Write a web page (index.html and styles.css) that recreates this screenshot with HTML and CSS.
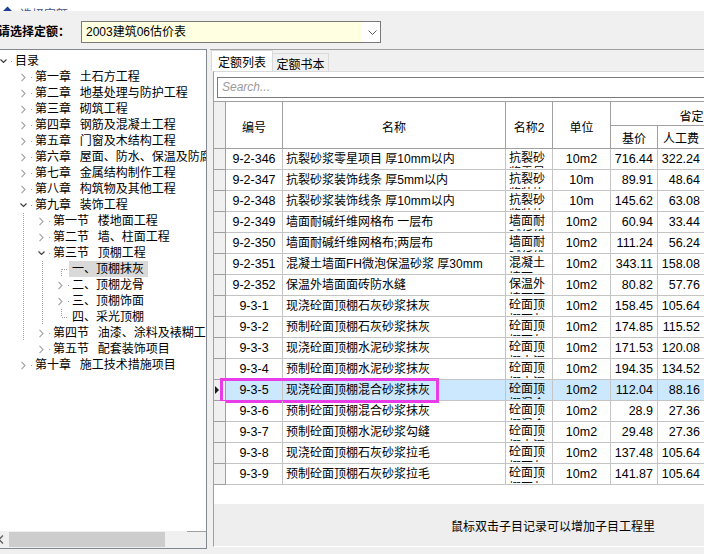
FILE: index.html
```html
<!DOCTYPE html>
<html lang="zh-CN">
<head>
<meta charset="utf-8">
<title>选择定额</title>
<link rel="stylesheet" href="styles.css">
</head>
<body>
<div class="titlebar"><span class="ticon"></span><span class="ttext">选择定额</span></div>

<div class="selrow">
  <span class="sellabel">请选择定额：</span>
  <div class="combo">
    <span class="combo-text">2003建筑06估价表</span>
    <span class="combo-btn"><svg width="9" height="5" viewBox="0 0 9 5"><path d="M0.5 0.5L4.5 4.5L8.5 0.5" fill="none" stroke="#606060" stroke-width="1"/></svg></span>
  </div>
</div>

<div class="main">
  <div class="tree">
    <div class="tree-body">
      <div class="node l0"><span class="arr"><svg class="ex" width="7" height="7" viewBox="0 0 7 7"><path d="M0.5 1.5L3.5 4.5L6.5 1.5" fill="none" stroke="#404040" stroke-width="1.2"/></svg><i class="dot"></i></span><span class="t">目录</span></div>
      <div class="node l1"><span class="arr"><svg class="co" width="7" height="9" viewBox="0 0 7 9"><path d="M1.5 0.8L5 4.5L1.5 8.2" fill="none" stroke="#a6a6a6" stroke-width="1.2"/></svg><i class="dot"></i></span><span class="t">第一章  土石方工程</span></div>
      <div class="node l1"><span class="arr"><svg class="co" width="7" height="9" viewBox="0 0 7 9"><path d="M1.5 0.8L5 4.5L1.5 8.2" fill="none" stroke="#a6a6a6" stroke-width="1.2"/></svg><i class="dot"></i></span><span class="t">第二章  地基处理与防护工程</span></div>
      <div class="node l1"><span class="arr"><svg class="co" width="7" height="9" viewBox="0 0 7 9"><path d="M1.5 0.8L5 4.5L1.5 8.2" fill="none" stroke="#a6a6a6" stroke-width="1.2"/></svg><i class="dot"></i></span><span class="t">第三章  砌筑工程</span></div>
      <div class="node l1"><span class="arr"><svg class="co" width="7" height="9" viewBox="0 0 7 9"><path d="M1.5 0.8L5 4.5L1.5 8.2" fill="none" stroke="#a6a6a6" stroke-width="1.2"/></svg><i class="dot"></i></span><span class="t">第四章  钢筋及混凝土工程</span></div>
      <div class="node l1"><span class="arr"><svg class="co" width="7" height="9" viewBox="0 0 7 9"><path d="M1.5 0.8L5 4.5L1.5 8.2" fill="none" stroke="#a6a6a6" stroke-width="1.2"/></svg><i class="dot"></i></span><span class="t">第五章  门窗及木结构工程</span></div>
      <div class="node l1"><span class="arr"><svg class="co" width="7" height="9" viewBox="0 0 7 9"><path d="M1.5 0.8L5 4.5L1.5 8.2" fill="none" stroke="#a6a6a6" stroke-width="1.2"/></svg><i class="dot"></i></span><span class="t">第六章  屋面、防水、保温及防腐工程</span></div>
      <div class="node l1"><span class="arr"><svg class="co" width="7" height="9" viewBox="0 0 7 9"><path d="M1.5 0.8L5 4.5L1.5 8.2" fill="none" stroke="#a6a6a6" stroke-width="1.2"/></svg><i class="dot"></i></span><span class="t">第七章  金属结构制作工程</span></div>
      <div class="node l1"><span class="arr"><svg class="co" width="7" height="9" viewBox="0 0 7 9"><path d="M1.5 0.8L5 4.5L1.5 8.2" fill="none" stroke="#a6a6a6" stroke-width="1.2"/></svg><i class="dot"></i></span><span class="t">第八章  构筑物及其他工程</span></div>
      <div class="node l1"><span class="arr"><svg class="ex" width="7" height="7" viewBox="0 0 7 7"><path d="M0.5 1.5L3.5 4.5L6.5 1.5" fill="none" stroke="#404040" stroke-width="1.2"/></svg><i class="dot"></i></span><span class="t">第九章  装饰工程</span></div>
      <div class="node l2 la"><span class="arr"><svg class="co" width="7" height="9" viewBox="0 0 7 9"><path d="M1.5 0.8L5 4.5L1.5 8.2" fill="none" stroke="#a6a6a6" stroke-width="1.2"/></svg><i class="dot"></i></span><span class="t">第一节  楼地面工程</span></div>
      <div class="node l2 la"><span class="arr"><svg class="co" width="7" height="9" viewBox="0 0 7 9"><path d="M1.5 0.8L5 4.5L1.5 8.2" fill="none" stroke="#a6a6a6" stroke-width="1.2"/></svg><i class="dot"></i></span><span class="t">第二节  墙、柱面工程</span></div>
      <div class="node l2 la"><span class="arr"><svg class="ex" width="7" height="7" viewBox="0 0 7 7"><path d="M0.5 1.5L3.5 4.5L6.5 1.5" fill="none" stroke="#404040" stroke-width="1.2"/></svg><i class="dot"></i></span><span class="t">第三节  顶棚工程</span></div>
      <div class="node l3 la lb lc1"><span class="arr"></span><span class="t sel">一、顶棚抹灰</span></div>
      <div class="node l3 la lb"><span class="arr"><svg class="co" width="7" height="9" viewBox="0 0 7 9"><path d="M1.5 0.8L5 4.5L1.5 8.2" fill="none" stroke="#a6a6a6" stroke-width="1.2"/></svg><i class="dot"></i></span><span class="t">二、顶棚龙骨</span></div>
      <div class="node l3 la lb"><span class="arr"><svg class="co" width="7" height="9" viewBox="0 0 7 9"><path d="M1.5 0.8L5 4.5L1.5 8.2" fill="none" stroke="#a6a6a6" stroke-width="1.2"/></svg><i class="dot"></i></span><span class="t">三、顶棚饰面</span></div>
      <div class="node l3 la lb lc2"><span class="arr"></span><span class="t">四、采光顶棚</span></div>
      <div class="node l2 la"><span class="arr"><svg class="co" width="7" height="9" viewBox="0 0 7 9"><path d="M1.5 0.8L5 4.5L1.5 8.2" fill="none" stroke="#a6a6a6" stroke-width="1.2"/></svg><i class="dot"></i></span><span class="t">第四节  油漆、涂料及裱糊工程</span></div>
      <div class="node l2"><span class="arr"><svg class="co" width="7" height="9" viewBox="0 0 7 9"><path d="M1.5 0.8L5 4.5L1.5 8.2" fill="none" stroke="#a6a6a6" stroke-width="1.2"/></svg><i class="dot"></i></span><span class="t">第五节  配套装饰项目</span></div>
      <div class="node l1"><span class="arr"><svg class="co" width="7" height="9" viewBox="0 0 7 9"><path d="M1.5 0.8L5 4.5L1.5 8.2" fill="none" stroke="#a6a6a6" stroke-width="1.2"/></svg><i class="dot"></i></span><span class="t">第十章  施工技术措施项目</span></div>
    </div>
    <div class="hscroll">
      <span class="hs-btn left"><svg width="9" height="9" viewBox="0 0 9 9"><path d="M3 0.5L-1 4.5L3 8.5" fill="none" stroke="#606060" stroke-width="1.3"/></svg></span>
      <span class="hs-thumb"></span>
      <span class="hs-track"></span>
      <span class="hs-btn right"><svg width="6" height="9" viewBox="0 0 6 9"><path d="M1 1L4.5 4.5L1 8" fill="none" stroke="#606060" stroke-width="1.3"/></svg></span>
    </div>
  </div>

  <div class="right">
    <div class="tabs">
      <span class="tab active">定额列表</span>
      <span class="tab">定额书本</span>
    </div>
    <div class="page">
      <div class="search">Search...</div>
      <div class="grid">
        <div class="ghead">
          <div class="h sel-h span2"></div>
          <div class="h span2">编号</div>
          <div class="h span2">名称</div>
          <div class="h span2">名称2</div>
          <div class="h span2">单位</div>
          <div class="h grp">省定额价</div>
          <div class="h">基价</div>
          <div class="h">人工费</div>
          <div class="h">材料费</div>
          <div class="h">机械费</div>
        </div>
        <div class="gbody">
          <div class="row"><span class="c s"></span><span class="c code">9-2-346</span><span class="c name">抗裂砂浆零星项目 厚10mm以内</span><span class="c n2"><span class="clip">抗裂砂浆零星项目</span></span><span class="c unit">10m2</span><span class="c num">716.44</span><span class="c num">322.24</span><span class="c num">391.81</span><span class="c num">2.39</span></div>
          <div class="row"><span class="c s"></span><span class="c code">9-2-347</span><span class="c name">抗裂砂浆装饰线条 厚5mm以内</span><span class="c n2"><span class="clip">抗裂砂浆装饰线条</span></span><span class="c unit">10m</span><span class="c num">89.91</span><span class="c num">48.64</span><span class="c num">40.83</span><span class="c num">0.44</span></div>
          <div class="row"><span class="c s"></span><span class="c code">9-2-348</span><span class="c name">抗裂砂浆装饰线条 厚10mm以内</span><span class="c n2"><span class="clip">抗裂砂浆装饰线条</span></span><span class="c unit">10m</span><span class="c num">145.62</span><span class="c num">63.08</span><span class="c num">81.66</span><span class="c num">0.88</span></div>
          <div class="row"><span class="c s"></span><span class="c code">9-2-349</span><span class="c name">墙面耐碱纤维网格布 一层布</span><span class="c n2"><span class="clip">墙面耐碱纤维网格布</span></span><span class="c unit">10m2</span><span class="c num">60.94</span><span class="c num">33.44</span><span class="c num">27.50</span><span class="c num"></span></div>
          <div class="row"><span class="c s"></span><span class="c code">9-2-350</span><span class="c name">墙面耐碱纤维网格布;两层布</span><span class="c n2"><span class="clip">墙面耐碱纤维网格布</span></span><span class="c unit">10m2</span><span class="c num">111.24</span><span class="c num">56.24</span><span class="c num">55.00</span><span class="c num"></span></div>
          <div class="row"><span class="c s"></span><span class="c code">9-2-351</span><span class="c name">混凝土墙面FH微泡保温砂浆 厚30mm</span><span class="c n2"><span class="clip">混凝土墙面FH微泡</span></span><span class="c unit">10m2</span><span class="c num">343.11</span><span class="c num">158.08</span><span class="c num">180.62</span><span class="c num">4.41</span></div>
          <div class="row"><span class="c s"></span><span class="c code">9-2-352</span><span class="c name">保温外墙面面砖防水缝</span><span class="c n2"><span class="clip">保温外墙面面砖</span></span><span class="c unit">10m2</span><span class="c num">80.82</span><span class="c num">57.76</span><span class="c num">23.06</span><span class="c num"></span></div>
          <div class="row"><span class="c s"></span><span class="c code">9-3-1</span><span class="c name">现浇砼面顶棚石灰砂浆抹灰</span><span class="c n2"><span class="clip">砼面顶棚石灰砂浆</span></span><span class="c unit">10m2</span><span class="c num">158.45</span><span class="c num">105.64</span><span class="c num">49.62</span><span class="c num">3.19</span></div>
          <div class="row"><span class="c s"></span><span class="c code">9-3-2</span><span class="c name">预制砼面顶棚石灰砂浆抹灰</span><span class="c n2"><span class="clip">砼面顶棚石灰砂浆</span></span><span class="c unit">10m2</span><span class="c num">174.85</span><span class="c num">115.52</span><span class="c num">55.72</span><span class="c num">3.61</span></div>
          <div class="row"><span class="c s"></span><span class="c code">9-3-3</span><span class="c name">现浇砼面顶棚水泥砂浆抹灰</span><span class="c n2"><span class="clip">砼面顶棚水泥砂浆</span></span><span class="c unit">10m2</span><span class="c num">171.53</span><span class="c num">120.08</span><span class="c num">48.26</span><span class="c num">3.19</span></div>
          <div class="row"><span class="c s"></span><span class="c code">9-3-4</span><span class="c name">预制砼面顶棚水泥砂浆抹灰</span><span class="c n2"><span class="clip">砼面顶棚水泥砂浆</span></span><span class="c unit">10m2</span><span class="c num">194.35</span><span class="c num">134.52</span><span class="c num">56.22</span><span class="c num">3.61</span></div>
          <div class="row cur"><span class="c s"><i class="tri"></i></span><span class="c code">9-3-5</span><span class="c name">现浇砼面顶棚混合砂浆抹灰</span><span class="c n2"><span class="clip">砼面顶棚混合砂浆</span></span><span class="c unit">10m2</span><span class="c num">112.04</span><span class="c num">88.16</span><span class="c num">20.69</span><span class="c num">3.19</span><i class="mark"></i></div>
          <div class="row"><span class="c s"></span><span class="c code">9-3-6</span><span class="c name">预制砼面顶棚混合砂浆抹灰</span><span class="c n2"><span class="clip">砼面顶棚混合砂浆</span></span><span class="c unit">10m2</span><span class="c num">28.9</span><span class="c num">27.36</span><span class="c num">1.54</span><span class="c num"></span></div>
          <div class="row"><span class="c s"></span><span class="c code">9-3-7</span><span class="c name">预制砼面顶棚水泥砂浆勾缝</span><span class="c n2"><span class="clip">砼面顶棚水泥砂浆</span></span><span class="c unit">10m2</span><span class="c num">29.48</span><span class="c num">27.36</span><span class="c num">2.12</span><span class="c num"></span></div>
          <div class="row"><span class="c s"></span><span class="c code">9-3-8</span><span class="c name">现浇砼面顶棚石灰砂浆拉毛</span><span class="c n2"><span class="clip">砼面顶棚石灰砂浆</span></span><span class="c unit">10m2</span><span class="c num">137.48</span><span class="c num">105.64</span><span class="c num">28.65</span><span class="c num">3.19</span></div>
          <div class="row"><span class="c s"></span><span class="c code">9-3-9</span><span class="c name">预制砼面顶棚石灰砂浆拉毛</span><span class="c n2"><span class="clip">砼面顶棚石灰砂浆</span></span><span class="c unit">10m2</span><span class="c num">141.87</span><span class="c num">105.64</span><span class="c num">32.62</span><span class="c num">3.61</span></div>
        </div>
      </div>
      <div class="hint">鼠标双击子目记录可以增加子目工程里</div>
    </div>
  </div>
</div>
</body>
</html>
```

FILE: styles.css
```css
* { box-sizing: border-box; }
html, body { margin: 0; padding: 0; }
body {
  width: 704px;
  height: 554px;
  overflow: hidden;
  background: #f0f0f0;
  font-family: "Liberation Sans", "Noto Sans CJK SC", sans-serif;
  font-size: 12px;
  color: #000;
}

/* title strip (cut off at the top) */
.titlebar {
  height: 11px;
  background: #fff;
  overflow: hidden;
  display: flex;
  align-items: flex-end;
  padding-left: 4px;
  gap: 9px;
}
.ticon {
  width: 7px;
  height: 7px;
  background: #1d3d8f;
  transform: rotate(45deg);
  margin-bottom: -4px;
}
.ttext {
  line-height: 12px;
  color: #4a5a8a;
  margin-bottom: -10px;
}

/* selector row */
.selrow {
  height: 38px;
  display: flex;
  align-items: flex-start;
  padding-top: 10px;
}
.sellabel {
  margin-left: -2px;
  width: 83px;
  font-weight: bold;
  line-height: 22px;
}
.combo {
  width: 300px;
  height: 22px;
  border: 1px solid #7a7a7a;
  background: #fff;
  display: flex;
}
.combo-text {
  width: 280px;
  background: #ffffe1;
  padding-left: 4px;
  line-height: 20px;
}
.combo-btn {
  flex: 1;
  display: flex;
  align-items: center;
  justify-content: center;
  padding-left: 2px;
}

/* main area */
.main {
  height: 505px;
  display: flex;
  align-items: flex-start;
}

/* tree */
.tree {
  width: 207px;
  height: 500px;
  background: #fff;
  border: 1px solid #828790;
  border-left: none;
  display: flex;
  flex-direction: column;
}
.tree-body {
  flex: 1;
  min-height: 0;
  overflow: hidden;
  padding-top: 3px;
}
.node {
  height: 16px;
  line-height: 16px;
  display: flex;
  align-items: center;
  white-space: pre;
  word-spacing: 1px;
  background-image: var(--a, none), var(--b, none), var(--c, none), var(--s, none);
  background-repeat: no-repeat;
  background-position: 23px 0, 42px 0, 61px var(--cy, 0px), 62px 8px;
  background-size: 1px 16px, 1px 16px, 1px 8px, 6px 1px;
}
.la { --a: repeating-linear-gradient(to bottom, #a0a0a0 0 1px, transparent 1px 2px); }
.lb { --b: repeating-linear-gradient(to bottom, #a0a0a0 0 1px, transparent 1px 2px); }
.lc1 {
  --c: repeating-linear-gradient(to bottom, #a0a0a0 0 1px, transparent 1px 2px);
  --cy: 8px;
  --s: repeating-linear-gradient(to right, #a0a0a0 0 1px, transparent 1px 2px);
}
.lc2 {
  --c: repeating-linear-gradient(to bottom, #a0a0a0 0 1px, transparent 1px 2px);
  --cy: 0px;
  --s: repeating-linear-gradient(to right, #a0a0a0 0 1px, transparent 1px 2px);
}
.l0 { padding-left: 0; }
.l1 { padding-left: 20px; }
.l2 { padding-left: 38px; }
.l3 { padding-left: 57px; }
.arr {
  width: 15px;
  flex: none;
  height: 16px;
  display: flex;
  align-items: center;
}
.arr svg { display: block; flex: none; }
.arr .ex { margin-top: 1px; }
.dot {
  width: 1px;
  height: 1px;
  background: #a0a0a0;
  margin-left: 4px;
  margin-top: 1px;
}
.t { line-height: 16px; }
.t.sel {
  background: #d9d9d9;
  margin-left: -3px;
  padding: 0 4px 0 3px;
}

/* horizontal scrollbar */
.hscroll {
  height: 17px;
  display: flex;
  background: #f0f0f0;
  flex: none;
}
.hs-btn {
  display: flex;
  align-items: center;
}
.hs-btn.left { width: 9px; }
.hs-btn.right { width: 17px; justify-content: center; }
.hs-thumb {
  width: 156px;
  margin: 1px 0;
  background: #cdcdcd;
}
.hs-track { flex: 1; }

/* right panel */
.right {
  flex: 1;
  min-width: 0;
  height: 505px;
  margin-left: 3px;
  border-top: 1px solid #a0a0a0;
  display: flex;
  flex-direction: column;
  overflow: hidden;
}
.tabs {
  height: 21px;
  display: flex;
  align-items: flex-end;
  padding-left: 1px;
  flex: none;
}
.tab {
  height: 18px;
  width: 56px;
  border: 1px solid #d9d9d9;
  border-bottom: none;
  border-left: none;
  background: #f0f0f0;
  display: flex;
  align-items: center;
  justify-content: center;
  padding-top: 1px;
}
.tab.active {
  height: 21px;
  width: 62px;
  background: #fff;
  border-left: 1px solid #d9d9d9;
  padding-top: 0;
}
.page {
  height: 476px;
  flex: none;
  margin-left: 3px;
  background: #fff;
  border-top: 1px solid #d9d9d9;
  border-left: 1px solid #a0a0a0;
  border-bottom: 1px solid #fff;
  display: flex;
  flex-direction: column;
  overflow: hidden;
}
.search {
  flex: none;
  margin: 5px 0 3px 3px;
  height: 21px;
  border: 1px solid #7a7a7a;
  border-right: none;
  color: #9a9a9a;
  font-style: italic;
  padding-left: 4px;
  line-height: 19px;
}

/* data grid */
.grid { flex: none; width: 611px; }
.ghead,
.row {
  display: grid;
  grid-template-columns: 12px 57px 223px 47px 58px 47px 47px 46px 46px;
}
.ghead {
  grid-template-rows: 24px 23px;
  border-top: 1px solid #a0a0a0;
  background: #fff;
}
.h {
  border-right: 1px solid #a0a0a0;
  border-bottom: 1px solid #a0a0a0;
  display: flex;
  align-items: center;
  justify-content: center;
  white-space: nowrap;
  overflow: hidden;
  padding-top: 1px;
}
.span2 { grid-row: span 2; padding-top: 2px; }
.sel-h { background: #f0f0f0; }
.grp { grid-column: span 4; padding-top: 3px; }

.row {
  height: 21px;
  position: relative;
}
.c {
  height: 21px;
  border-right: 1px solid #c4c4c4;
  border-bottom: 1px solid #c4c4c4;
  overflow: hidden;
  white-space: nowrap;
  line-height: 20px;
}
.c.s {
  background: #f0f0f0;
  border-right-color: #a0a0a0;
  border-bottom-color: #a0a0a0;
  display: flex;
  align-items: center;
  padding-left: 1px;
}
.code { text-align: center; font-size: 12.5px; }
.name { padding-left: 3px; }
.n2 {
  white-space: normal;
  padding: 2px 0 0 3px;
}
.n2 .clip {
  display: block;
  height: 17px;
  overflow: hidden;
  word-break: break-all;
  line-height: 15px;
}
.unit { text-align: center; font-size: 12.5px; }
.num { text-align: right; padding-right: 4px; font-size: 12.5px; }
.row.cur .c:not(.s) { background: #cce8ff; }
.tri {
  width: 0;
  height: 0;
  border-top: 4px solid transparent;
  border-bottom: 4px solid transparent;
  border-left: 4px solid #1a1a1a;
}
.mark {
  position: absolute;
  left: 6px;
  top: -2px;
  width: 219px;
  height: 25px;
  border: 3px solid #e83ce8;
  pointer-events: none;
}

/* bottom hint */
.hint {
  margin-top: auto;
  height: 42px;
  flex: none;
  background: #eeeeee;
  line-height: 42px;
  padding: 2px 0 0 237px;
  white-space: nowrap;
}
```
